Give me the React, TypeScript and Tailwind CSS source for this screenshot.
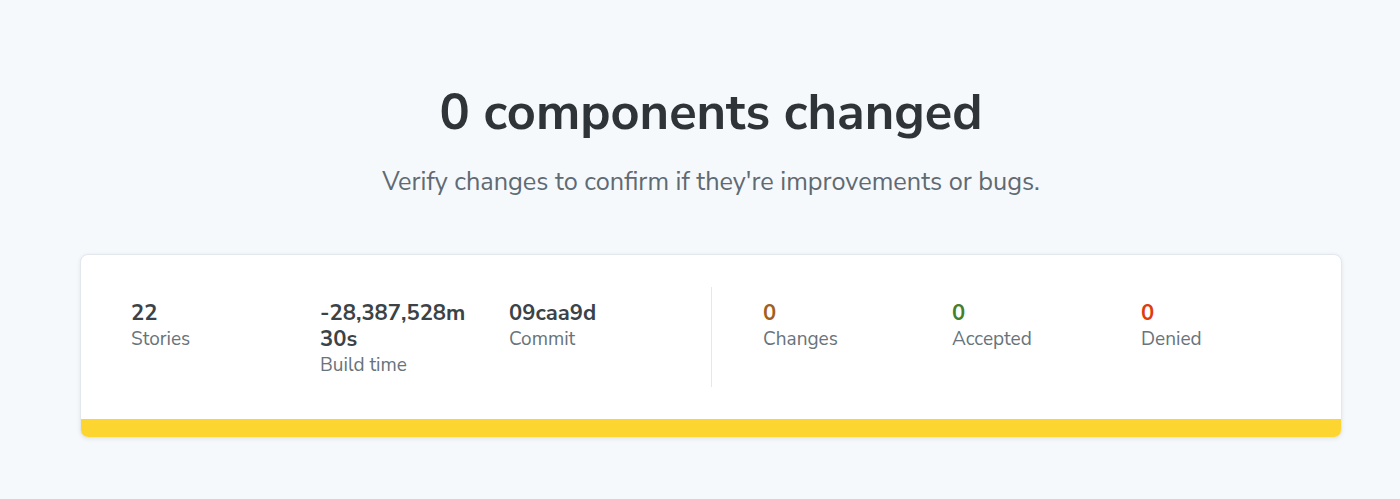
const font = { fontFamily: '"Nunito Sans", Lato, "Noto Sans", sans-serif' }

interface StatProps {
  value: string
  label: string
  tone?: string
}

function Stat({ value, label, tone = 'text-[#3b4348]' }: StatProps) {
  return (
    <div className="w-[189px] shrink-0 pr-[18px] pt-[13px]">
      <div className={`text-[22px] font-bold leading-[26px] ${tone}`}>{value}</div>
      <div className="text-[19px] leading-[26px] text-[#68737b]">{label}</div>
    </div>
  )
}

export default function App() {
  return (
    <div className="min-h-[499px] bg-[#f6f9fc] px-[80px] pt-[81px]" style={font}>
      <div className="w-[1262px]">
        <h1 className="text-center text-[50.5px] font-bold leading-[64px] text-[#2e3438]">0 components changed</h1>
        <p className="mt-[22px] text-center text-[25.3px] leading-[30px] text-[#5f6a72]">
          Verify changes to confirm if they're improvements or bugs.
        </p>

        <div className="mt-[57px] overflow-hidden rounded-[8px] border border-[#e3e8ee] bg-white shadow-[0_1px_4px_rgba(0,0,0,0.08)]">
          <div className="flex py-[32px]">
            <div className="flex w-[630px] pl-[50px]">
              <Stat value="22" label="Stories" />
              <Stat value="-28,387,528m 30s" label="Build time" />
              <Stat value="09caa9d" label="Commit" />
            </div>
            <div className="h-[100px] w-px bg-[#e3e8ee]" />
            <div className="flex pl-[51px]">
              <Stat value="0" label="Changes" tone="text-[#a35f1f]" />
              <Stat value="0" label="Accepted" tone="text-[#46802a]" />
              <Stat value="0" label="Denied" tone="text-[#e03c0b]" />
            </div>
          </div>
          <div className="h-[18px] bg-[#fdd531]" />
        </div>
      </div>
    </div>
  )
}
